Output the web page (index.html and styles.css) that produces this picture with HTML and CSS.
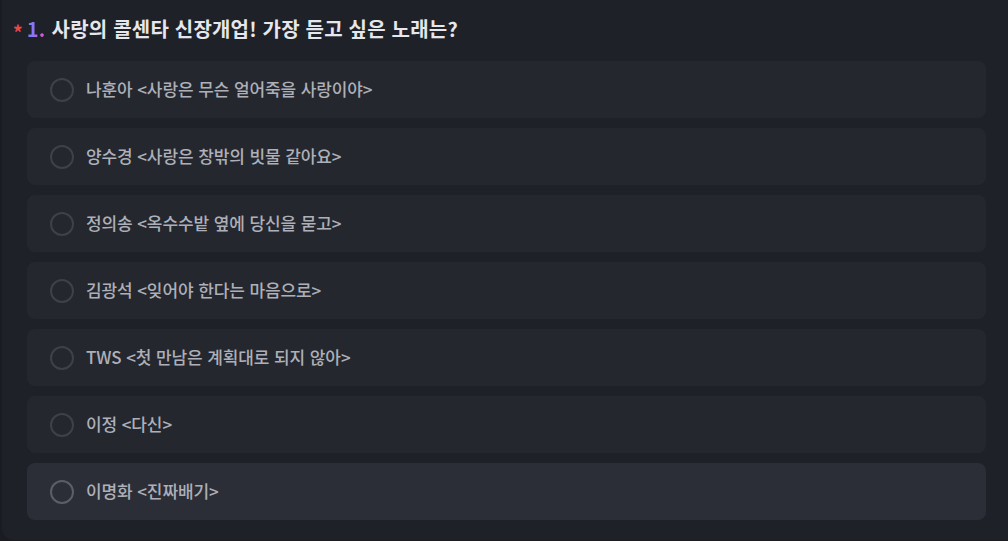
FILE: index.html
```html
<!DOCTYPE html>
<html lang="ko">
<head>
    <meta charset="UTF-8">
    <meta name="viewport" content="width=device-width, initial-scale=1.0">
    <title>설문 - 질문 1</title>
    <link rel="stylesheet" href="styles.css">
</head>
<body>
    <div class="card">
        <h2 class="question">
            <span class="required">*</span>
            <span class="number">1.</span>
            <span class="question-text">사랑의 콜센타 신장개업! 가장 듣고 싶은 노래는?</span>
        </h2>

        <div class="options">
            <label class="option">
                <span class="radio"></span>
                <span class="option-label">나훈아 &lt;사랑은 무슨 얼어죽을 사랑이야&gt;</span>
            </label>
            <label class="option">
                <span class="radio"></span>
                <span class="option-label">양수경 &lt;사랑은 창밖의 빗물 같아요&gt;</span>
            </label>
            <label class="option">
                <span class="radio"></span>
                <span class="option-label">정의송 &lt;옥수수밭 옆에 당신을 묻고&gt;</span>
            </label>
            <label class="option">
                <span class="radio"></span>
                <span class="option-label">김광석 &lt;잊어야 한다는 마음으로&gt;</span>
            </label>
            <label class="option">
                <span class="radio"></span>
                <span class="option-label">TWS &lt;첫 만남은 계획대로 되지 않아&gt;</span>
            </label>
            <label class="option">
                <span class="radio"></span>
                <span class="option-label">이정 &lt;다신&gt;</span>
            </label>
            <label class="option hover">
                <span class="radio"></span>
                <span class="option-label">이명화 &lt;진짜배기&gt;</span>
            </label>
        </div>
    </div>
</body>
</html>
```

FILE: styles.css
```css
html, body {
    margin: 0;
    padding: 0;
    height: 100%;
    overflow: hidden;
}
body {
    background-color: #1a1c22;
    font-family: "Noto Sans CJK KR", "Noto Sans", sans-serif;
}
.card {
    background-color: #1f2128;
    margin-left: 2px;
    padding: 13px 22px 20px 25px;
    border-radius: 0 0 0 12px;
}
.question {
    display: flex;
    align-items: center;
    margin: 0 0 18px 0;
    height: 30px;
    font-size: 20px;
    font-weight: 700;
    color: #e6e7ec;
    letter-spacing: 0.2px;
}
.required {
    color: #e5484d;
    font-size: 19px;
    margin: 0 4px 0 -14px;
    position: relative;
    top: 3px;
}
.number {
    background: linear-gradient(90deg, #5d86ff, #f24fd6);
    -webkit-background-clip: text;
    background-clip: text;
    color: transparent;
    margin-right: 6px;
}
.options {
    display: flex;
    flex-direction: column;
    gap: 10px;
}
.option {
    display: flex;
    align-items: center;
    gap: 12px;
    height: 57px;
    padding-left: 23px;
    background-color: #25272f;
    border-radius: 8px;
    cursor: pointer;
}
.option.hover,
.option:hover {
    background-color: #2c2e37;
}
.radio {
    width: 20px;
    height: 20px;
    border: 2px solid #3e4149;
    border-radius: 50%;
    flex-shrink: 0;
}
.option.hover .radio {
    border-color: #5b5e67;
}
.option-label {
    font-size: 17px;
    font-weight: 500;
    color: #adb0b8;
    letter-spacing: -0.1px;
    position: relative;
    top: -1px;
}
```
